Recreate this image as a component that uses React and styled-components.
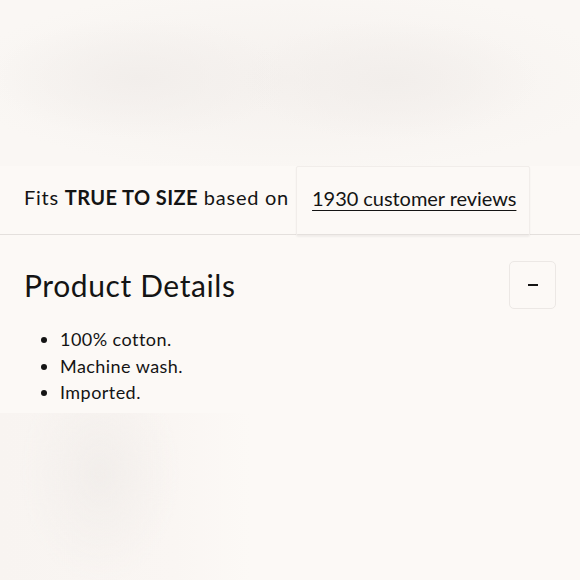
import styled, { createGlobalStyle } from 'styled-components';

const GlobalStyle = createGlobalStyle`
  html, body {
    margin: 0;
    padding: 0;
    background: #fcf9f6;
    font-family: Lato, 'Open Sans', sans-serif;
    color: #141414;
  }
`;

const Page = styled.div`
  width: 580px;
  height: 580px;
  overflow: hidden;
  display: flex;
  flex-direction: column;
`;

const BlurTop = styled.div`
  height: 166px;
  flex-shrink: 0;
  background:
    radial-gradient(ellipse 150px 60px at 140px 78px, #f2eeeb 0%, rgba(242,238,235,0) 100%),
    radial-gradient(ellipse 150px 60px at 390px 80px, #f2eeeb 0%, rgba(242,238,235,0) 100%),
    radial-gradient(ellipse 330px 95px at 290px 80px, #f5f1ee 0%, rgba(245,241,238,0) 100%),
    #faf7f4;
`;

const FitRow = styled.div`
  display: flex;
  align-items: stretch;
  height: 68px;
  border-bottom: 1px solid #e4e0dd;
  flex-shrink: 0;
`;

const FitText = styled.div`
  display: flex;
  align-items: center;
  padding: 0 0 6px 24px;
  font-size: 20px;
  letter-spacing: 0.75px;
  white-space: nowrap;

  b {
    font-weight: 700;
    letter-spacing: 0.4px;
  }
`;

const ReviewsBox = styled.div`
  display: flex;
  align-items: center;
  margin-left: 7px;
  margin-bottom: -2px;
  padding: 0 13px 6px 15px;
  border: 1px solid #f1edea;
  border-radius: 2px;
  box-shadow: 0 1px 2px rgba(0, 0, 0, 0.05);
`;

const ReviewsLink = styled.a`
  font-size: 20px;
  letter-spacing: -0.05px;
  color: #141414;
  text-decoration: underline;
  text-underline-offset: 4px;
  text-decoration-thickness: 1px;
`;

const Details = styled.section`
  padding: 24px 24px 0 24px;
  flex-shrink: 0;
`;

const DetailsHead = styled.div`
  display: flex;
  align-items: center;
  justify-content: space-between;
`;

const Title = styled.h2`
  margin: 0;
  font-size: 30px;
  font-weight: 400;
  letter-spacing: 0.6px;
  padding-top: 2px;
`;

const ToggleButton = styled.button`
  width: 47px;
  height: 48px;
  margin-top: 2px;
  border: 1px solid #ece8e5;
  border-radius: 5px;
  background: transparent;
  display: flex;
  align-items: center;
  justify-content: center;
  padding: 0;
`;

const Dash = styled.span`
  width: 10px;
  height: 2px;
  background: #141414;
`;

const List = styled.ul`
  margin: 17px 0 0 0;
  padding-left: 36px;
  font-size: 18px;
  letter-spacing: 0.45px;
  line-height: 26.5px;
`;

const BlurBottom = styled.div`
  width: 250px;
  flex: 1;
  margin-top: 7px;
  background:
    radial-gradient(ellipse 80px 110px at 100px 60px, #f2eeeb 0%, rgba(242,238,235,0) 100%),
    linear-gradient(to right, #f8f4f1, #faf6f3 70%, #fcf9f6);
`;

export default function App() {
  return (
    <>
      <GlobalStyle />
      <Page>
        <BlurTop />
        <FitRow>
          <FitText>
            Fits&nbsp;<b>TRUE TO SIZE</b>&nbsp;based on
          </FitText>
          <ReviewsBox>
            <ReviewsLink href='#'>1930 customer reviews</ReviewsLink>
          </ReviewsBox>
        </FitRow>
        <Details>
          <DetailsHead>
            <Title>Product Details</Title>
            <ToggleButton aria-label='collapse'>
              <Dash />
            </ToggleButton>
          </DetailsHead>
          <List>
            <li>100% cotton.</li>
            <li>Machine wash.</li>
            <li>Imported.</li>
          </List>
        </Details>
        <BlurBottom />
      </Page>
    </>
  );
}
